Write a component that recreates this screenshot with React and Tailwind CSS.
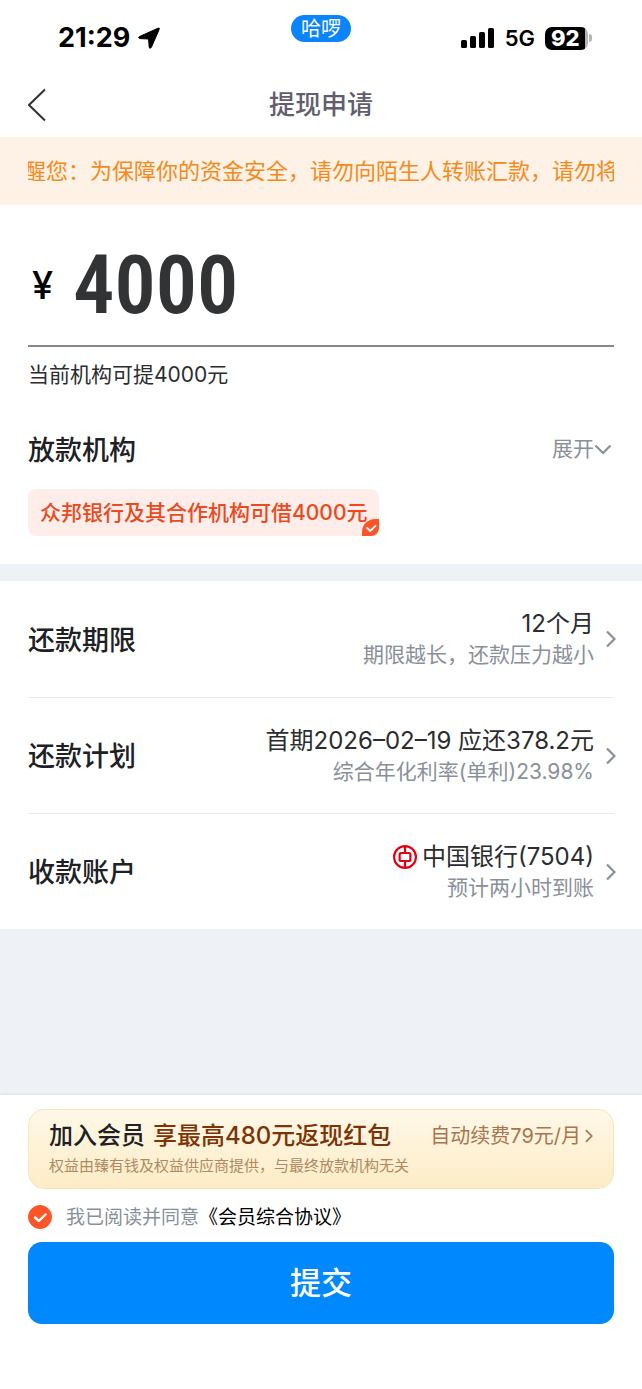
import { useState } from 'react'

function Chevron({ className = '' }) {
  return (
    <svg viewBox="0 0 10 18" className={className} fill="none" stroke="currentColor" strokeWidth="2.2" aria-hidden="true">
      <path d="M1 1.5 L8.5 9 L1 16.5" />
    </svg>
  )
}

function StatusBar() {
  return (
    <div className="grid h-[72px] grid-cols-[1fr_auto_1fr] px-[50px] font-bold text-black">
      <div className="flex items-center gap-2 pt-1 pl-2 text-[27px]">
        <span>21:29</span>
        <svg viewBox="0 0 22 22" className="h-[22px] w-[22px]" aria-hidden="true">
          <path d="M20 1.2 Q21.800 .4 21.200 2.400 L13.400 20.200 Q12.200 22.400 11.200 20.400 L10.600 12 L1.800 11.600 Q-.4 10.800 1.400 9.600 Z" fill="currentColor" stroke="currentColor" strokeWidth="1" strokeLinejoin="round" />
        </svg>
      </div>
      <div className="mt-[15px] h-[27px] w-[60px] rounded-full bg-[#0a84ff] text-center text-[20px] leading-7 font-normal text-white">
        哈啰
      </div>
      <div className="flex items-center justify-end pt-1">
        <svg viewBox="0 0 34 22" className="mr-2.5 h-[22px] w-[34px]" fill="currentColor" aria-hidden="true">
          <rect x="0" y="13" width="6" height="8" rx="1.6" />
          <rect x="9" y="9" width="6" height="12" rx="1.6" />
          <rect x="18" y="5" width="6" height="16" rx="1.6" />
          <rect x="27" y="1" width="6" height="20" rx="1.6" />
        </svg>
        <span className="mr-2.5 text-[22px] font-semibold">5G</span>
        <span className="flex h-[23px] w-[43px] items-center rounded-[7px] bg-gradient-to-r from-black from-93% to-[#b5b5b5] to-93% pl-1.5 text-[22px] leading-none font-extrabold text-white">
          92
        </span>
        <span className="ml-px h-2 w-[3px] rounded-r-full bg-[#b5b5b5]" />
      </div>
    </div>
  )
}

function DetailRow({ label, value, hint, icon }) {
  return (
    <button type="button" className="flex h-[116px] w-full items-center justify-between border-t border-[#e9eaec] text-left first:border-t-0">
      <span className="pt-1 text-[27px] font-medium text-[#202124]">{label}</span>
      <span className="-mr-0.5 flex items-center gap-3">
        <span className="flex flex-col items-end">
          <span className="flex items-center gap-1 text-[24px] leading-8 text-[#2b2d30]">
            {icon}
            {value}
          </span>
          <span className="text-[21px] leading-[30px] text-[#8a9099]">{hint}</span>
        </span>
        <Chevron className="h-[18px] w-2.5 text-[#8a9099]" />
      </span>
    </button>
  )
}

function BankLogo() {
  return (
    <svg viewBox="0 0 26 26" className="h-[26px] w-[26px]" fill="none" stroke="#e60012" strokeWidth="2.2" aria-hidden="true">
      <circle cx="13" cy="13" r="10.9" />
      <rect x="7.6" y="9" width="10.8" height="8" rx="1.5" />
      <path d="M13 2.5V9M13 17v6.5" />
    </svg>
  )
}

export default function App() {
  const [agreed, setAgreed] = useState(true)

  return (
    <div className="flex min-h-screen flex-col bg-[#eef2f6] font-['Inter','Noto_Sans_CJK_SC',sans-serif]">
      <header className="bg-white">
        <StatusBar />
        <div className="grid h-[65px] grid-cols-[1fr_auto_1fr] items-center px-7">
          <button type="button" aria-label="返回" className="w-5">
            <svg viewBox="0 0 20 34" className="h-[34px] w-5" fill="none" stroke="#333" strokeWidth="2" aria-hidden="true">
              <path d="M17 1.5 L1 17 L17 32.5" />
            </svg>
          </button>
          <h1 className="text-[26px] font-medium text-[#625e6e]">提现申请</h1>
        </div>
      </header>

      <div className="bg-[#fef1e5] px-7">
        <div className="flex h-[68px] items-center justify-center overflow-hidden">
          <p className="shrink-0 text-[22px] whitespace-nowrap text-[#f58a1c]">
            醒您：为保障你的资金安全，请勿向陌生人转账汇款，请勿将
          </p>
        </div>
      </div>

      <main>
        <section className="bg-white px-7 pb-7">
          <div className="flex h-[142px] items-center gap-5 border-b-2 border-[#84898e] pt-5 pl-1">
            <label htmlFor="amount" className="text-[38px] font-medium text-black">¥</label>
            <input
              id="amount"
              inputMode="numeric"
              defaultValue="4000"
              className="h-20 w-full min-w-0 bg-transparent font-['Roboto_Condensed','Liberation_Sans_Narrow','Roboto',sans-serif] text-[82px] font-semibold text-[#323335] outline-none"
            />
          </div>
          <p className="mt-3 text-[21px] leading-8 text-[#2b2d30]">当前机构可提4000元</p>

          <div className="mt-10 flex h-10 items-center justify-between">
            <h2 className="text-[27px] font-medium text-[#202124]">放款机构</h2>
            <button type="button" className="flex items-center pr-0.5 pb-1 text-[21px] text-[#8a9099]">
              展开
              <svg viewBox="0 0 18 11" className="h-[11px] w-[18px]" fill="none" stroke="currentColor" strokeWidth="2.2" aria-hidden="true">
                <path d="M1.5 1.5 L9 9 L16.5 1.5" />
              </svg>
            </button>
          </div>

          <button
            type="button"
            aria-pressed="true"
            className="relative mt-[18px] block h-[47px] overflow-hidden rounded-lg bg-[#ffedea] px-3 text-[21px] font-medium text-[#ea4a1d]"
          >
            众邦银行及其合作机构可借4000元
            <svg viewBox="0 0 17 17" className="absolute right-0 bottom-0 h-[17px] w-[17px]" fill="none" aria-hidden="true">
              <path d="M0 17 V13 A13 13 0 0 1 13 0 H17 V17 Z" fill="#ff5428" />
              <path d="M5.2 9 L8.2 12 L13.5 6.8" stroke="#fff" strokeWidth="1.8" strokeLinecap="round" />
            </svg>
          </button>
        </section>

        <section className="mt-[17px] bg-white px-7">
          <DetailRow label="还款期限" value="12个月" hint="期限越长，还款压力越小" />
          <DetailRow label="还款计划" value="首期2026–02–19 应还378.2元" hint="综合年化利率(单利)23.98%" />
          <DetailRow label="收款账户" value="中国银行(7504)" hint="预计两小时到账" icon={<BankLogo />} />
        </section>
      </main>

      <footer className="mt-auto bg-white px-7 pt-3.5 pb-[65px] shadow-[0_-1px_3px_rgba(0,0,0,0.08)]">
        <button
          type="button"
          className="block w-full rounded-2xl border border-[#fae5b5] bg-gradient-to-b from-[#fff8e8] to-[#fdecc6] px-5 pt-2.5 pb-2 text-left"
        >
          <span className="flex items-center justify-between">
            <span className="flex gap-2 text-[24px] leading-8 font-medium">
              <span className="text-[#202124]">加入会员</span>
              <span className="text-[#7c3406]">享最高480元返现红包</span>
            </span>
            <span className="flex items-center gap-1 text-[20px] text-[#a8754f]">
              自动续费79元/月
              <Chevron className="h-3.5 w-2" />
            </span>
          </span>
          <span className="block text-[15px] leading-7 text-[#ae8a5f]">权益由臻有钱及权益供应商提供，与最终放款机构无关</span>
        </button>

        <div className="flex h-[53px] items-center pt-0.5 text-[19px]">
          <label className="flex items-center gap-3.5 text-[#8a9099]">
            <span className="relative h-6 w-6">
              <input
                type="checkbox"
                checked={agreed}
                onChange={(e) => setAgreed(e.target.checked)}
                className="block h-6 w-6 appearance-none rounded-full border border-[#c4c8cc] checked:border-[#ff5428] checked:bg-[#ff5428]"
              />
              {agreed && (
                <svg viewBox="0 0 24 24" className="pointer-events-none absolute inset-0" fill="none" stroke="#fff" strokeWidth="2.4" strokeLinecap="round" strokeLinejoin="round" aria-hidden="true">
                  <path d="M7 12.5 L10.8 16 L17.5 9.5" />
                </svg>
              )}
            </span>
            <span className="pt-1">我已阅读并同意</span>
          </label>
          <a href="#agreement" className="pt-1 text-black">《会员综合协议》</a>
        </div>

        <button type="button" className="h-[82px] w-full rounded-[14px] bg-[#0088ff] text-[31px] font-medium text-white">
          提交
        </button>
      </footer>
    </div>
  )
}
